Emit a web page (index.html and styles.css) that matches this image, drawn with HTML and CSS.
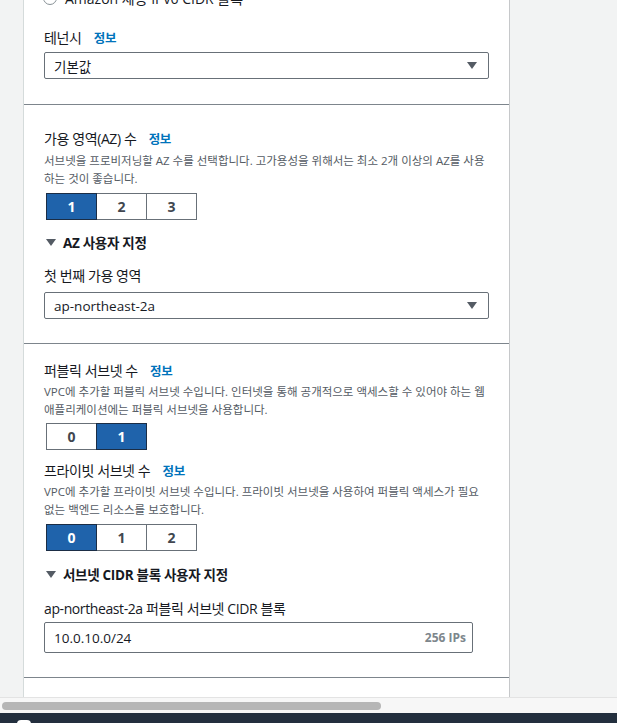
FILE: index.html
```html
<!DOCTYPE html>
<html lang="ko">
<head>
<meta charset="utf-8">
<title>VPC 설정</title>
<link rel="stylesheet" href="styles.css">
</head>
<body>
<div class="viewport">
  <div class="panel">
    <section class="section first">
      <div class="radio-row">
        <span class="radio"></span>
        <span class="radio-label">Amazon 제공 IPv6 CIDR 블록</span>
      </div>
      <div class="label gap-20">테넌시 <a class="info">정보</a></div>
      <div class="select gap-4">
        <span>기본값</span>
        <svg class="caret" width="10" height="7" viewBox="0 0 10 7"><polygon points="0,0 10,0 5,7" fill="#545b64"/></svg>
      </div>
    </section>

    <section class="section second">
      <div class="label">가용 영역(AZ) 수 <a class="info">정보</a></div>
      <p class="desc gap-3">서브넷을 프로비저닝할 AZ 수를 선택합니다. 고가용성을 위해서는 최소 2개 이상의 AZ를 사용하는 것이 좋습니다.</p>
      <div class="seg gap-5">
        <button class="seg-btn on">1</button>
        <button class="seg-btn">2</button>
        <button class="seg-btn">3</button>
      </div>
      <div class="expander gap-12">
        <svg class="tri" width="10" height="7" viewBox="0 0 10 7"><polygon points="0,0 10,0 5,7" fill="#545b64"/></svg>
        <span>AZ 사용자 지정</span>
      </div>
      <div class="label gap-14">첫 번째 가용 영역</div>
      <div class="select gap-6">
        <span>ap-northeast-2a</span>
        <svg class="caret" width="10" height="7" viewBox="0 0 10 7"><polygon points="0,0 10,0 5,7" fill="#545b64"/></svg>
      </div>
    </section>

    <section class="section third">
      <div class="label">퍼블릭 서브넷 수 <a class="info">정보</a></div>
      <p class="desc gap-2">VPC에 추가할 퍼블릭 서브넷 수입니다. 인터넷을 통해 공개적으로 액세스할 수 있어야 하는 웹 애플리케이션에는 퍼블릭 서브넷을 사용합니다.</p>
      <div class="seg gap-4">
        <button class="seg-btn">0</button>
        <button class="seg-btn on">1</button>
      </div>
      <div class="label gap-11">프라이빗 서브넷 수 <a class="info">정보</a></div>
      <p class="desc gap-2">VPC에 추가할 프라이빗 서브넷 수입니다. 프라이빗 서브넷을 사용하여 퍼블릭 액세스가 필요 없는 백엔드 리소스를 보호합니다.</p>
      <div class="seg gap-5">
        <button class="seg-btn on">0</button>
        <button class="seg-btn">1</button>
        <button class="seg-btn">2</button>
      </div>
      <div class="expander gap-13">
        <svg class="tri" width="10" height="7" viewBox="0 0 10 7"><polygon points="0,0 10,0 5,7" fill="#545b64"/></svg>
        <span>서브넷 CIDR 블록 사용자 지정</span>
      </div>
      <div class="label gap-15">ap-northeast-2a 퍼블릭 서브넷 CIDR 블록</div>
      <div class="input gap-3">
        <span>10.0.10.0/24</span>
        <span class="ips">256 IPs</span>
      </div>
    </section>

    <section class="section rest"></section>
  </div>
</div>
<div class="hscroll"><div class="thumb"></div></div>
<div class="footer"><span class="footer-icon"></span></div>
</body>
</html>
```

FILE: styles.css
```css
html, body {
  margin: 0;
  padding: 0;
}
body {
  height: 723px;
  overflow: hidden;
  background: #f2f3f3;
  font-family: "Open Sans", "Noto Sans CJK KR", sans-serif;
  color: #16191f;
}
.viewport {
  height: 697px;
  overflow: hidden;
}
.panel {
  margin-left: 23px;
  margin-top: -12px;
  width: 485px;
  min-height: 760px;
  background: #fff;
  border-left: 1px solid #d5dbdb;
  border-right: 1px solid #c6c8ca;
}
.section {
  padding: 0 20px 24px 20px;
  border-bottom: 1px solid #7d858c;
}
.section.first { padding-bottom: 25px; }
.section.second { padding-top: 24px; }
.section.third { padding-top: 17px; }
.section.rest { border-bottom: none; }

.gap-2 { margin-top: 2px; }
.gap-3 { margin-top: 3px; }
.gap-4 { margin-top: 4px; }
.gap-5 { margin-top: 5px; }
.gap-6 { margin-top: 6px; }
.gap-11 { margin-top: 11px; }
.gap-12 { margin-top: 12px; }
.gap-13 { margin-top: 13px; }
.gap-14 { margin-top: 14px; }
.gap-15 { margin-top: 15px; }
.gap-20 { margin-top: 20px; }

.radio-row {
  display: flex;
  align-items: center;
  height: 20px;
  font-size: 14px;
}
.radio {
  width: 12px;
  height: 12px;
  border: 1px solid #879196;
  border-radius: 50%;
  margin-left: -1px;
  margin-right: 8px;
  flex: none;
}
.label {
  height: 20px;
  line-height: 20px;
  font-size: 14px;
  letter-spacing: -0.4px;
  white-space: nowrap;
}
.info {
  color: #0073bb;
  font-weight: 700;
  font-size: 12.5px;
  margin-left: 9px;
  letter-spacing: -0.3px;
}
.desc {
  margin-bottom: 0;
  font-size: 11.5px;
  line-height: 18px;
  letter-spacing: 0;
  color: #545b64;
}
.select, .input {
  box-sizing: border-box;
  height: 27px;
  border: 1px solid #687078;
  border-radius: 2px;
  display: flex;
  align-items: center;
  justify-content: space-between;
  padding: 0 11px 0 9px;
  font-size: 13.5px;
}
.input {
  width: 429px;
  height: 31px;
  padding-right: 6px;
}
.ips {
  font-size: 12px;
  font-weight: 700;
  color: #7d868c;
}
.seg {
  display: flex;
  margin-left: 2px;
}
.seg-btn {
  box-sizing: border-box;
  width: 51px;
  height: 27px;
  border: 1px solid #687078;
  background: #fff;
  color: #414750;
  font-family: "Open Sans", "Noto Sans CJK KR", sans-serif;
  font-weight: 700;
  font-size: 14px;
  padding: 0;
}
.seg-btn + .seg-btn { margin-left: -1px; }
.seg-btn.on {
  background: #1f63ab;
  border-color: #1b2d45;
  color: #fff;
  position: relative;
  z-index: 1;
}
.expander {
  height: 20px;
  display: flex;
  align-items: center;
  font-size: 13.5px;
  font-weight: 700;
  letter-spacing: -0.3px;
  color: #16191f;
}
.tri {
  margin-left: 2px;
  margin-right: 7px;
}
.hscroll {
  box-sizing: border-box;
  height: 16px;
  background: #f7f7f7;
  border-top: 1px solid #e3e3e3;
  padding: 4px 0 0 2px;
}
.thumb {
  width: 379px;
  height: 8px;
  border-radius: 4px;
  background: #b6b6b6;
}
.footer {
  height: 10px;
  background: #232f3e;
  padding: 7px 0 0 17px;
}
.footer-icon {
  display: block;
  width: 14px;
  height: 14px;
  border-radius: 4px;
  background: #fff;
}
```
